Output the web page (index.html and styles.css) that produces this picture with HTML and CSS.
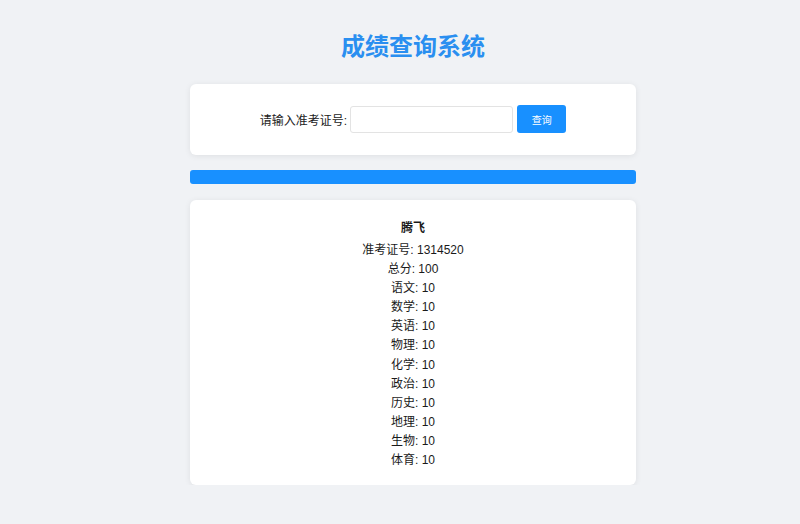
FILE: index.html
```html
<!DOCTYPE html>
<html lang="zh">
<head>
<meta charset="utf-8">
<title>成绩查询系统</title>
<link rel="stylesheet" href="styles.css">
</head>
<body>
<div class="page">
  <h1 class="title">成绩查询系统</h1>
  <div class="card search">
    <label class="label" for="num">请输入准考证号:</label>
    <input class="input" id="num" type="text">
    <button class="btn">查询</button>
  </div>
  <div class="bar"></div>
  <div class="card result">
    <div class="name">腾飞</div>
    <div class="line">准考证号: 1314520</div>
    <div class="line">总分: 100</div>
    <div class="line">语文: 10</div>
    <div class="line">数学: 10</div>
    <div class="line">英语: 10</div>
    <div class="line">物理: 10</div>
    <div class="line">化学: 10</div>
    <div class="line">政治: 10</div>
    <div class="line">历史: 10</div>
    <div class="line">地理: 10</div>
    <div class="line">生物: 10</div>
    <div class="line">体育: 10</div>
  </div>
</div>
</body>
</html>
```
FILE: styles.css
```css
html, body {
  margin: 0;
  padding: 0;
  background: #f0f2f5;
  font-family: "Liberation Sans", Arial, "Noto Sans CJK SC", sans-serif;
  color: #1a1a1a;
}
.page {
  width: 446px;
  margin: 0 0 0 190px;
  padding-top: 33px;
}
.title {
  margin: 0;
  text-align: center;
  font-size: 24px;
  line-height: 28px;
  font-weight: bold;
  color: #2a8ff0;
}
.card {
  background: #fff;
  border-radius: 6px;
  box-shadow: 0 1px 6px rgba(0, 0, 0, 0.08);
}
.search {
  margin-top: 23px;
  height: 71px;
  display: flex;
  align-items: center;
  justify-content: center;
  box-sizing: border-box;
  padding-bottom: 1px;
}
.label {
  font-size: 12px;
  color: #1a1a1a;
  margin-right: 3px;
}
.input {
  width: 163px;
  height: 27px;
  box-sizing: border-box;
  border: 1px solid #e3e3e3;
  border-radius: 3px;
  padding: 0 6px;
  outline: none;
  font-size: 12px;
}
.btn {
  margin-left: 4px;
  width: 49px;
  height: 28px;
  border: none;
  border-radius: 3px;
  background: #1890ff;
  color: #fff;
  font-size: 10px;
  font-family: "Liberation Sans", "Noto Sans CJK SC", sans-serif;
  padding: 0;
}
.bar {
  margin-top: 15px;
  height: 14px;
  background: #1890ff;
  border-radius: 3px;
}
.result {
  margin-top: 16px;
  padding: 19px 0 15px;
  text-align: center;
  font-size: 12px;
}
.name {
  font-weight: bold;
  line-height: 19px;
  margin-bottom: 3px;
}
.line {
  line-height: 19.1px;
}
```
